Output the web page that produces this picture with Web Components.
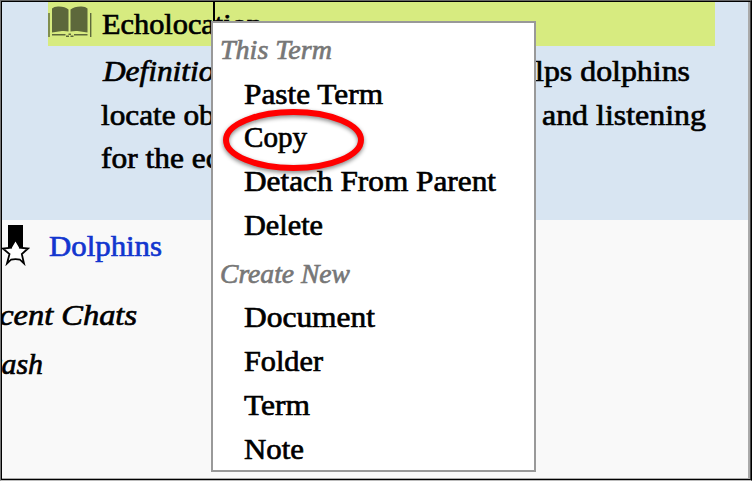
<!DOCTYPE html>
<html lang="en">
<head>
<meta charset="utf-8">
<title>Glossary outline</title>
<style>
html,body{margin:0;width:752px;height:481px;overflow:hidden}
body{font:28.5px "Liberation Serif",serif;color:#000}
</style>
</head>
<body>
<outline-app></outline-app>
<script>
// A run of text stretched horizontally so that it takes the given width.
class FittedText extends HTMLElement{
  connectedCallback(){
    const root=this.attachShadow({mode:'open'});
    root.innerHTML=`<style>:host{display:inline-block;white-space:nowrap;flex:none;-webkit-text-stroke:.65px currentColor}span{display:inline-block;transform-origin:0 50%}</style><span><slot></slot></span>`;
    const s=root.querySelector('span'),w=+this.getAttribute('width');
    s.style.transform='translateY(.7px) scaleX('+w/s.getBoundingClientRect().width+')';
    this.style.width=w+'px';
  }
}
class BookIcon extends HTMLElement{
  connectedCallback(){
    this.attachShadow({mode:'open'}).innerHTML=`<style>:host{display:block;width:44px;height:32px}svg{display:block}</style>
<svg width="44" height="32" viewBox="0 0 44 32" fill="#5d683b">
<path d="M4 2.500Q6 .7 10 .5Q17 .3 20.500 3.500V25.500Q18 24.800 14 25L4 26.500Z"/><path d="M22.500 3.500Q26.500.3 33.500.5Q37.500.7 39.500 2.500V26.500L29.500 25Q25.500 24.800 22.500 25.500Z"/>
<path d="M.3 7h1.400v24H.3zM42 7h1.400v24H42z"/>
<path d="M4 28H17.500v1.500H4zM26 28h13.500v1.500H26zM18 29.500h3V31h-3zM22.500 29.500h3V31h-3zM20.500 27.500h2.500V29h-2.500z"/></svg>`;
  }
}
class MedalIcon extends HTMLElement{
  connectedCallback(){
    this.attachShadow({mode:'open'}).innerHTML=`<style>:host{display:block;width:28px;height:41px}svg{display:block}</style>
<svg width="28" height="41" viewBox="0 0 28 41"><path d="M6 0h15v23H6z"/>
<path d="M13.500 16.500L17 22.500L26 23.500L19.800 29L22.500 38.500L18 34.700Q13.500 33.500 9 34.700L4.500 38.500L7.500 29L.8 23.500L10 22.500Z" fill="#fff"/>
<path d="M10 22.700L.8 23.500L7.500 29L5 38.500L9 34.700Q13.500 33.500 18 34.700L22 38.500L19.800 29L26 23.500L17 22.700" fill="none" stroke="#000" stroke-width="1.800"/></svg>`;
  }
}
class MenuGroup extends HTMLElement{
  connectedCallback(){
    this.attachShadow({mode:'open'}).innerHTML=`<style>:host{display:block}header{font-size:27px;font-style:italic;color:#777;line-height:44.500px;padding:0 0 0 7px;height:44.700px}
.items{display:grid;grid-auto-rows:43.750px;line-height:43.750px;padding-left:31px}</style><header><slot name="title"></slot></header><div class="items"><slot></slot></div>`;
  }
}
class ContextMenu extends HTMLElement{
  connectedCallback(){
    this.attachShadow({mode:'open'}).innerHTML=`<style>:host{display:block;box-sizing:border-box;width:325px;height:451px;border:2px solid #999;background:#fff;padding-top:4px}
menu-group+menu-group{margin-top:4px}</style>
<menu-group><fitted-text slot="title" width="112">This Term</fitted-text>
<fitted-text width="139">Paste Term</fitted-text><fitted-text width="63">Copy</fitted-text><fitted-text width="252">Detach From Parent</fitted-text><fitted-text width="79">Delete</fitted-text></menu-group>
<menu-group><fitted-text slot="title" width="130">Create New</fitted-text>
<fitted-text width="131">Document</fitted-text><fitted-text width="79">Folder</fitted-text><fitted-text width="66">Term</fitted-text><fitted-text width="60">Note</fitted-text></menu-group>`;
  }
}
class OutlineApp extends HTMLElement{
  connectedCallback(){
    this.attachShadow({mode:'open'}).innerHTML=`<style>
:host{display:block;position:relative;box-sizing:border-box;width:752px;height:481px;overflow:hidden;background:#f9f9f9;padding:2px 4px 0 2px}
.entry{height:218px;background:#d8e5f2;box-sizing:border-box}
.row{display:flex;height:43.600px;line-height:43.600px}
.term{background:#d7eb80;margin:0 33px 3.700px 46px;gap:9.500px}
.term book-icon{margin-top:4px}
.def{padding-left:99px;justify-content:space-between}
.link{color:#1236cf;height:48px;line-height:52.500px;gap:18.500px}
.link medal-icon{margin-top:4.500px}
.recent{margin:22px 0 0 -37px;height:49px;line-height:49px}
.trash{margin-left:-27px;height:49px;line-height:49px}
i{display:flex}
.caret{position:absolute;left:213px;top:2px;width:1.500px;height:20px;background:#000}
context-menu{position:absolute;left:211px;top:21px}
.ring{position:absolute;left:213px;top:99px;filter:drop-shadow(0 2px 2px #0007)}
.frame{position:absolute;inset:0;box-sizing:border-box;border:1px solid #000;border-top-color:#666;border-left-color:#777;border-bottom-color:#bbb;pointer-events:none}
.frame::before{content:"";position:absolute;inset:0;border:1px solid #000;border-right-color:#444;box-shadow:inset -2px -1px #aaa}
</style>
<div class="entry">
<div class="row term"><book-icon></book-icon><fitted-text width="160">Echolocation</fitted-text></div>
<div class="row def" style="padding-right:58px;padding-left:101px"><i><fitted-text width="127">Definition</fitted-text></i><fitted-text width="185">helps dolphins</fitted-text></div>
<div class="row def" style="padding-right:42px"><fitted-text width="171">locate objects</fitted-text><fitted-text width="164">and listening</fitted-text></div>
<div class="row def"><fitted-text width="150">for the echo</fitted-text></div>
</div>
<div class="row link"><medal-icon></medal-icon><fitted-text width="113">Dolphins</fitted-text></div>
<div class="row recent"><i><fitted-text width="172">Recent Chats</fitted-text></i></div>
<div class="row trash"><i><fitted-text width="68">Trash</fitted-text></i></div>
<div class="caret"></div>
<context-menu></context-menu>
<svg class="ring" width="161" height="82"><ellipse cx="80.500" cy="41" rx="67.500" ry="28" fill="none" stroke="#f00" stroke-width="6"/></svg>
<div class="frame"></div>`;
  }
}
customElements.define('fitted-text',FittedText);
customElements.define('book-icon',BookIcon);
customElements.define('medal-icon',MedalIcon);
customElements.define('menu-group',MenuGroup);
customElements.define('context-menu',ContextMenu);
customElements.define('outline-app',OutlineApp);
</script>
</body>
</html>
